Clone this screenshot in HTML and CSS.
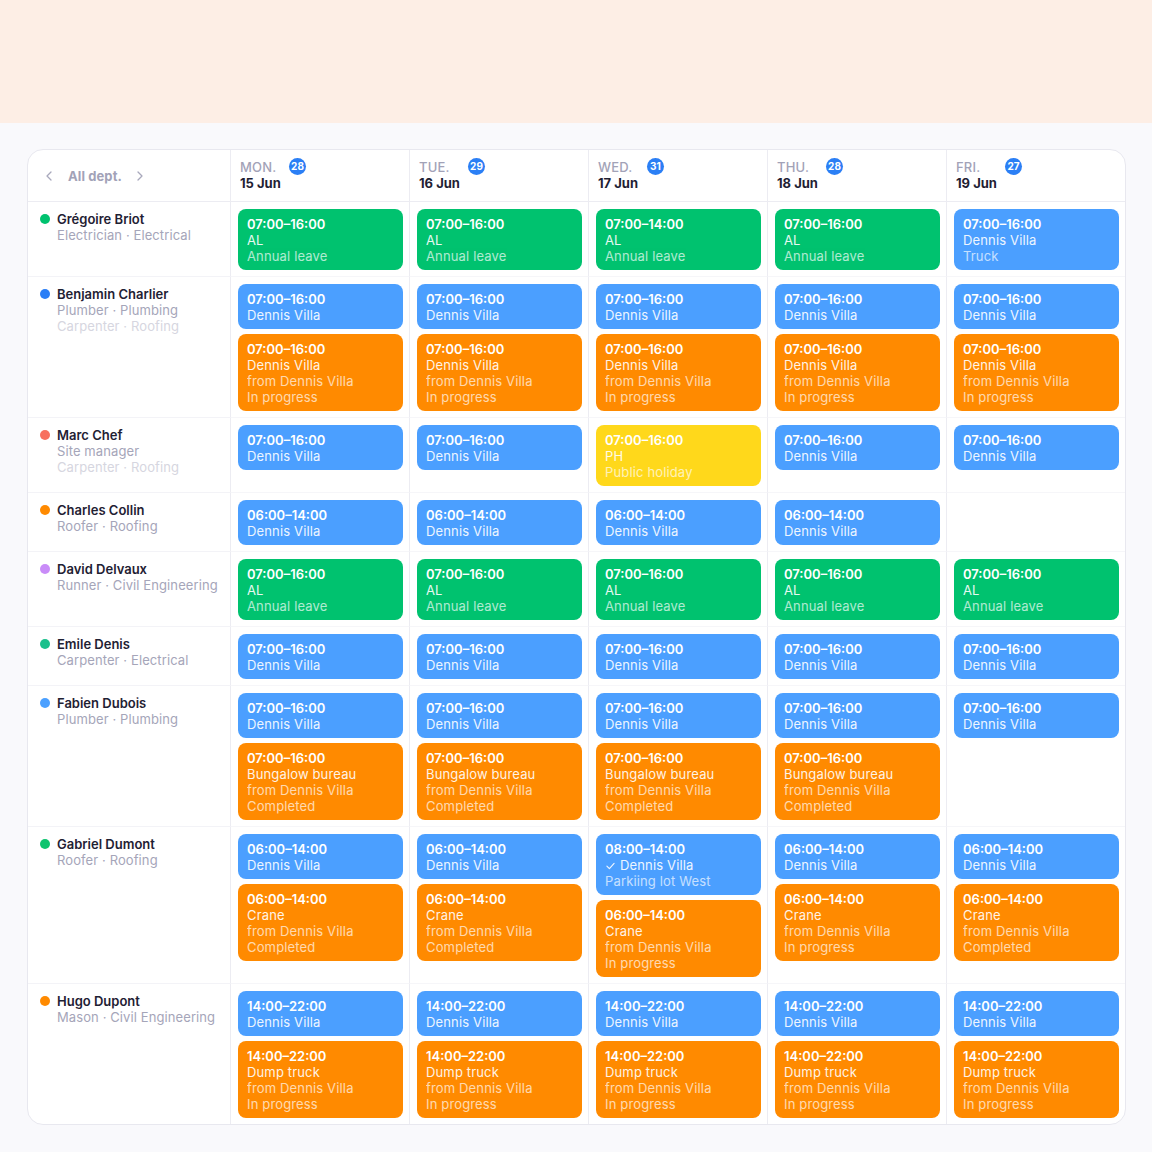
FILE: index.html
```html
<!DOCTYPE html>
<html lang="en">
  <head>
    <title>Schedule</title>
    <link rel="stylesheet" href="styles.css">
  </head>
  <body>
    <div class="band"></div>
    <div class="planner">
      <div class="head dept">
        <svg class="chev" viewBox="0 0 6 10"><path d="M5 1 1 5l4 4"/></svg>
        <span class="dept-name">All dept.</span>
        <svg class="chev" viewBox="0 0 6 10"><path d="M1 1l4 4-4 4"/></svg>
      </div>
      <div class="head day"><div><span class="dname">MON.</span><span class="badge">28</span></div><b>15 Jun</b></div>
      <div class="head day"><div><span class="dname">TUE.</span><span class="badge">29</span></div><b>16 Jun</b></div>
      <div class="head day"><div><span class="dname">WED.</span><span class="badge">31</span></div><b>17 Jun</b></div>
      <div class="head day"><div><span class="dname">THU.</span><span class="badge">28</span></div><b>18 Jun</b></div>
      <div class="head day"><div><span class="dname">FRI.</span><span class="badge">27</span></div><b>19 Jun</b></div>

      <!-- Grégoire -->
      <div class="person"><i class="dot" style="background:#00c26f"></i><div><b>Grégoire Briot</b><span>Electrician · Electrical</span></div></div>
      <div class="cell"><div class="shift green"><b>07:00–16:00</b><span class="sub">AL</span><span class="dim">Annual leave</span></div></div>
      <div class="cell"><div class="shift green"><b>07:00–16:00</b><span class="sub">AL</span><span class="dim">Annual leave</span></div></div>
      <div class="cell"><div class="shift green"><b>07:00–14:00</b><span class="sub">AL</span><span class="dim">Annual leave</span></div></div>
      <div class="cell"><div class="shift green"><b>07:00–16:00</b><span class="sub">AL</span><span class="dim">Annual leave</span></div></div>
      <div class="cell"><div class="shift blue"><b>07:00–16:00</b><span class="sub">Dennis Villa</span><span class="dim">Truck</span></div></div>

      <!-- Benjamin -->
      <div class="person"><i class="dot" style="background:#2a7ef6"></i><div><b>Benjamin Charlier</b><span>Plumber · Plumbing</span><span class="faint">Carpenter · Roofing</span></div></div>
      <div class="cell">
        <div class="shift blue"><b>07:00–16:00</b><span class="sub">Dennis Villa</span></div>
        <div class="shift orange"><b>07:00–16:00</b><span class="sub">Dennis Villa</span><span class="dim">from Dennis Villa</span><span class="dim">In progress</span></div>
      </div>
      <div class="cell">
        <div class="shift blue"><b>07:00–16:00</b><span class="sub">Dennis Villa</span></div>
        <div class="shift orange"><b>07:00–16:00</b><span class="sub">Dennis Villa</span><span class="dim">from Dennis Villa</span><span class="dim">In progress</span></div>
      </div>
      <div class="cell">
        <div class="shift blue"><b>07:00–16:00</b><span class="sub">Dennis Villa</span></div>
        <div class="shift orange"><b>07:00–16:00</b><span class="sub">Dennis Villa</span><span class="dim">from Dennis Villa</span><span class="dim">In progress</span></div>
      </div>
      <div class="cell">
        <div class="shift blue"><b>07:00–16:00</b><span class="sub">Dennis Villa</span></div>
        <div class="shift orange"><b>07:00–16:00</b><span class="sub">Dennis Villa</span><span class="dim">from Dennis Villa</span><span class="dim">In progress</span></div>
      </div>
      <div class="cell">
        <div class="shift blue"><b>07:00–16:00</b><span class="sub">Dennis Villa</span></div>
        <div class="shift orange"><b>07:00–16:00</b><span class="sub">Dennis Villa</span><span class="dim">from Dennis Villa</span><span class="dim">In progress</span></div>
      </div>

      <!-- Marc -->
      <div class="person"><i class="dot" style="background:#f7705f"></i><div><b>Marc Chef</b><span>Site manager</span><span class="faint">Carpenter · Roofing</span></div></div>
      <div class="cell"><div class="shift blue"><b>07:00–16:00</b><span class="sub">Dennis Villa</span></div></div>
      <div class="cell"><div class="shift blue"><b>07:00–16:00</b><span class="sub">Dennis Villa</span></div></div>
      <div class="cell"><div class="shift yellow"><b>07:00–16:00</b><span class="sub">PH</span><span class="dim">Public holiday</span></div></div>
      <div class="cell"><div class="shift blue"><b>07:00–16:00</b><span class="sub">Dennis Villa</span></div></div>
      <div class="cell"><div class="shift blue"><b>07:00–16:00</b><span class="sub">Dennis Villa</span></div></div>

      <!-- Charles -->
      <div class="person"><i class="dot" style="background:#ff8a00"></i><div><b>Charles Collin</b><span>Roofer · Roofing</span></div></div>
      <div class="cell"><div class="shift blue"><b>06:00–14:00</b><span class="sub">Dennis Villa</span></div></div>
      <div class="cell"><div class="shift blue"><b>06:00–14:00</b><span class="sub">Dennis Villa</span></div></div>
      <div class="cell"><div class="shift blue"><b>06:00–14:00</b><span class="sub">Dennis Villa</span></div></div>
      <div class="cell"><div class="shift blue"><b>06:00–14:00</b><span class="sub">Dennis Villa</span></div></div>
      <div class="cell"></div>

      <!-- David -->
      <div class="person"><i class="dot" style="background:#c98cf8"></i><div><b>David Delvaux</b><span>Runner · Civil Engineering</span></div></div>
      <div class="cell"><div class="shift green"><b>07:00–16:00</b><span class="sub">AL</span><span class="dim">Annual leave</span></div></div>
      <div class="cell"><div class="shift green"><b>07:00–16:00</b><span class="sub">AL</span><span class="dim">Annual leave</span></div></div>
      <div class="cell"><div class="shift green"><b>07:00–16:00</b><span class="sub">AL</span><span class="dim">Annual leave</span></div></div>
      <div class="cell"><div class="shift green"><b>07:00–16:00</b><span class="sub">AL</span><span class="dim">Annual leave</span></div></div>
      <div class="cell"><div class="shift green"><b>07:00–16:00</b><span class="sub">AL</span><span class="dim">Annual leave</span></div></div>

      <!-- Emile -->
      <div class="person"><i class="dot" style="background:#1bc08c"></i><div><b>Emile Denis</b><span>Carpenter · Electrical</span></div></div>
      <div class="cell"><div class="shift blue"><b>07:00–16:00</b><span class="sub">Dennis Villa</span></div></div>
      <div class="cell"><div class="shift blue"><b>07:00–16:00</b><span class="sub">Dennis Villa</span></div></div>
      <div class="cell"><div class="shift blue"><b>07:00–16:00</b><span class="sub">Dennis Villa</span></div></div>
      <div class="cell"><div class="shift blue"><b>07:00–16:00</b><span class="sub">Dennis Villa</span></div></div>
      <div class="cell"><div class="shift blue"><b>07:00–16:00</b><span class="sub">Dennis Villa</span></div></div>

      <!-- Fabien -->
      <div class="person"><i class="dot" style="background:#4ba0ff"></i><div><b>Fabien Dubois</b><span>Plumber · Plumbing</span></div></div>
      <div class="cell">
        <div class="shift blue"><b>07:00–16:00</b><span class="sub">Dennis Villa</span></div>
        <div class="shift orange"><b>07:00–16:00</b><span class="sub">Bungalow bureau</span><span class="dim">from Dennis Villa</span><span class="dim">Completed</span></div>
      </div>
      <div class="cell">
        <div class="shift blue"><b>07:00–16:00</b><span class="sub">Dennis Villa</span></div>
        <div class="shift orange"><b>07:00–16:00</b><span class="sub">Bungalow bureau</span><span class="dim">from Dennis Villa</span><span class="dim">Completed</span></div>
      </div>
      <div class="cell">
        <div class="shift blue"><b>07:00–16:00</b><span class="sub">Dennis Villa</span></div>
        <div class="shift orange"><b>07:00–16:00</b><span class="sub">Bungalow bureau</span><span class="dim">from Dennis Villa</span><span class="dim">Completed</span></div>
      </div>
      <div class="cell">
        <div class="shift blue"><b>07:00–16:00</b><span class="sub">Dennis Villa</span></div>
        <div class="shift orange"><b>07:00–16:00</b><span class="sub">Bungalow bureau</span><span class="dim">from Dennis Villa</span><span class="dim">Completed</span></div>
      </div>
      <div class="cell">
        <div class="shift blue"><b>07:00–16:00</b><span class="sub">Dennis Villa</span></div>
      </div>

      <!-- Gabriel -->
      <div class="person"><i class="dot" style="background:#0ec46f"></i><div><b>Gabriel Dumont</b><span>Roofer · Roofing</span></div></div>
      <div class="cell">
        <div class="shift blue"><b>06:00–14:00</b><span class="sub">Dennis Villa</span></div>
        <div class="shift orange"><b>06:00–14:00</b><span class="sub">Crane</span><span class="dim">from Dennis Villa</span><span class="dim">Completed</span></div>
      </div>
      <div class="cell">
        <div class="shift blue"><b>06:00–14:00</b><span class="sub">Dennis Villa</span></div>
        <div class="shift orange"><b>06:00–14:00</b><span class="sub">Crane</span><span class="dim">from Dennis Villa</span><span class="dim">Completed</span></div>
      </div>
      <div class="cell">
        <div class="shift blue"><b>08:00–14:00</b><span class="sub"><svg class="tick" viewBox="0 0 10 8"><path d="M1 4.2 3.8 7 9 1.2"/></svg>Dennis Villa</span><span class="dim">Parkiing lot West</span></div>
        <div class="shift orange"><b>06:00–14:00</b><span class="sub">Crane</span><span class="dim">from Dennis Villa</span><span class="dim">In progress</span></div>
      </div>
      <div class="cell">
        <div class="shift blue"><b>06:00–14:00</b><span class="sub">Dennis Villa</span></div>
        <div class="shift orange"><b>06:00–14:00</b><span class="sub">Crane</span><span class="dim">from Dennis Villa</span><span class="dim">In progress</span></div>
      </div>
      <div class="cell">
        <div class="shift blue"><b>06:00–14:00</b><span class="sub">Dennis Villa</span></div>
        <div class="shift orange"><b>06:00–14:00</b><span class="sub">Crane</span><span class="dim">from Dennis Villa</span><span class="dim">Completed</span></div>
      </div>

      <!-- Hugo -->
      <div class="person last"><i class="dot" style="background:#ff8a00"></i><div><b>Hugo Dupont</b><span>Mason · Civil Engineering</span></div></div>
      <div class="cell last">
        <div class="shift blue"><b>14:00–22:00</b><span class="sub">Dennis Villa</span></div>
        <div class="shift orange"><b>14:00–22:00</b><span class="sub">Dump truck</span><span class="dim">from Dennis Villa</span><span class="dim">In progress</span></div>
      </div>
      <div class="cell last">
        <div class="shift blue"><b>14:00–22:00</b><span class="sub">Dennis Villa</span></div>
        <div class="shift orange"><b>14:00–22:00</b><span class="sub">Dump truck</span><span class="dim">from Dennis Villa</span><span class="dim">In progress</span></div>
      </div>
      <div class="cell last">
        <div class="shift blue"><b>14:00–22:00</b><span class="sub">Dennis Villa</span></div>
        <div class="shift orange"><b>14:00–22:00</b><span class="sub">Dump truck</span><span class="dim">from Dennis Villa</span><span class="dim">In progress</span></div>
      </div>
      <div class="cell last">
        <div class="shift blue"><b>14:00–22:00</b><span class="sub">Dennis Villa</span></div>
        <div class="shift orange"><b>14:00–22:00</b><span class="sub">Dump truck</span><span class="dim">from Dennis Villa</span><span class="dim">In progress</span></div>
      </div>
      <div class="cell last">
        <div class="shift blue"><b>14:00–22:00</b><span class="sub">Dennis Villa</span></div>
        <div class="shift orange"><b>14:00–22:00</b><span class="sub">Dump truck</span><span class="dim">from Dennis Villa</span><span class="dim">In progress</span></div>
      </div>
    </div>
  </body>
</html>
```

FILE: styles.css
```css
body {margin:0;background:#f9f9fc;font:13px/16px "Inter","Noto Sans",sans-serif;color:#1f2133}
.band {height:123px;background:#fdeee5}

.planner {display:grid;grid-template-columns:202px repeat(5,179px);margin:26px 0 0 27px;width:max-content;background:#fff;border:1px solid #e8e8ef;border-radius:16px;overflow:hidden}

.head {height:52px;box-sizing:border-box;border-bottom:1px solid #ececf2}
.dept {display:flex;align-items:center;padding-left:18px}
.dept-name {font-weight:700;color:#a2a2b7;padding:0 15px 0 16px;letter-spacing:.1px}
.chev {width:6px;height:10px;fill:none;stroke:#a8a8bc;stroke-width:1.3;stroke-linecap:round;stroke-linejoin:round}
.day {border-left:1px solid #ececf2;padding:8px 9px 0}
.day > div {display:flex;align-items:center;height:17px}
.dname {width:49px;color:#a2a2b7;font-weight:500;letter-spacing:.2px}
.badge {width:17px;height:17px;border-radius:50%;background:#2b7ff5;color:#fff;font-size:10px;font-weight:700;line-height:17px;text-align:center}
.day b {display:block;font-weight:700;color:#1f2133}

.person {display:flex;align-items:flex-start;gap:7px;padding:9px 0 0 12px;border-bottom:1px solid #f3f3f7}
.person b {display:block;font-weight:600;color:#1f2133}
.person span {display:block;color:#a5a5b9;letter-spacing:.1px}
.person .faint {color:#d6d6e0}
.dot {flex:none;width:10px;height:10px;border-radius:50%;margin-top:3px}

.cell {display:flex;flex-direction:column;gap:5px;padding:7px 6px 6px 7px;border-left:1px solid #ececf2;border-bottom:1px solid #f6f6f9}
.last {border-bottom:0}

.shift {border-radius:8px;padding:7px 9px 6px;color:#fff}
.shift b, .shift span {display:block;white-space:nowrap}
.shift b {font-weight:600}
.shift span {letter-spacing:.15px}
.shift .sub {opacity:.9}
.shift .dim {opacity:.68}
.blue {background:#4b9fff}
.green {background:#00c26f}
.orange {background:#ff8a00}
.yellow {background:#ffd81b}
.tick {width:9px;height:8px;margin:0 5px 0 1px;fill:none;stroke:#fff;stroke-width:1.3;stroke-linecap:round;stroke-linejoin:round}
```
